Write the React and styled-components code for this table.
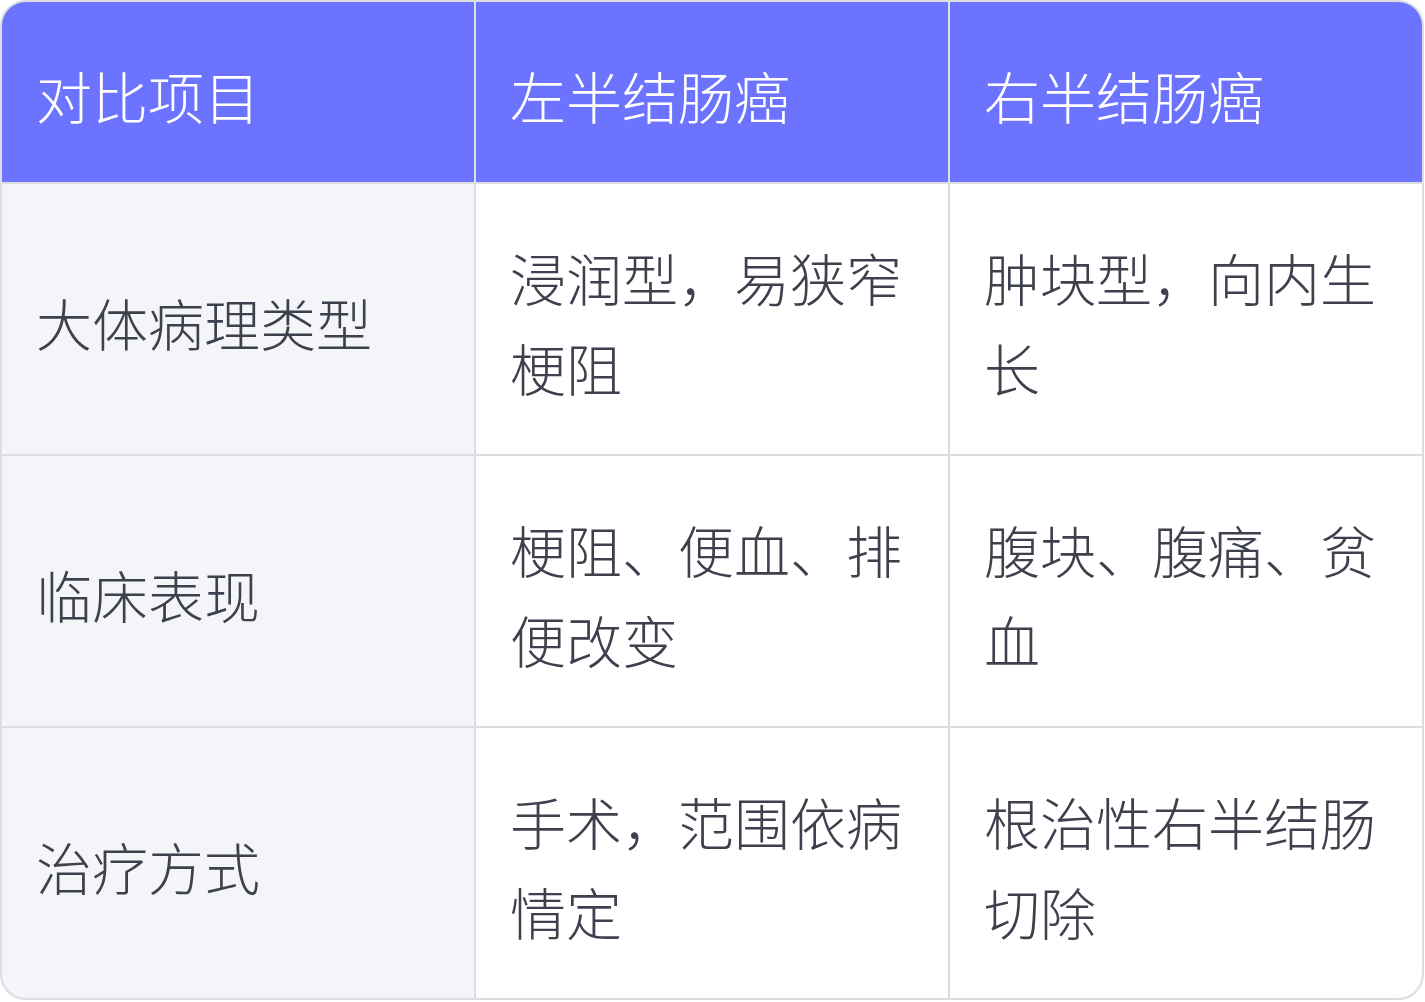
import React from "react";
import styled, { createGlobalStyle } from "styled-components";

const Global = createGlobalStyle`
  html, body { margin: 0; padding: 0; background: #ffffff; }
  body { font-family: "Noto Sans CJK SC", "Noto Sans", sans-serif; }
`;

const Table = styled.div`
  box-sizing: border-box;
  width: 1424px;
  display: grid;
  grid-template-columns: repeat(3, 1fr);
  gap: 2px;
  background: #dcdde3;
  border: 2px solid #dcdde3;
  border-radius: 26px;
  overflow: hidden;
`;

const Cell = styled.div`
  box-sizing: border-box;
  display: flex;
  align-items: ${(p) => (p.$center ? "center" : "flex-start")};
  padding: 48px 34px 42px;
  font-family: "Noto Sans CJK SC", "Noto Sans", sans-serif;
  font-size: 56px;
  font-weight: 300;
  line-height: 90px;
  color: ${(p) => (p.$head ? "#ffffff" : "#3e414d")};
  background: ${(p) => (p.$head ? "#6c74ff" : p.$label ? "#f4f5f9" : "#ffffff")};
  word-break: break-all;
`;

const headers = ["对比项目", "左半结肠癌", "右半结肠癌"];
const rows = [
  ["大体病理类型", "浸润型，易狭窄梗阻", "肿块型，向内生长"],
  ["临床表现", "梗阻、便血、排便改变", "腹块、腹痛、贫血"],
  ["治疗方式", "手术，范围依病情定", "根治性右半结肠切除"],
];

export default function App() {
  return (
    <>
      <Global />
      <Table>
        {headers.map((h) => (
          <Cell key={h} $head $center>
            {h}
          </Cell>
        ))}
        {rows.map((r) =>
          r.map((c, i) => (
            <Cell key={c} $label={i === 0} $center={i === 0}>
              {c}
            </Cell>
          ))
        )}
      </Table>
    </>
  );
}
